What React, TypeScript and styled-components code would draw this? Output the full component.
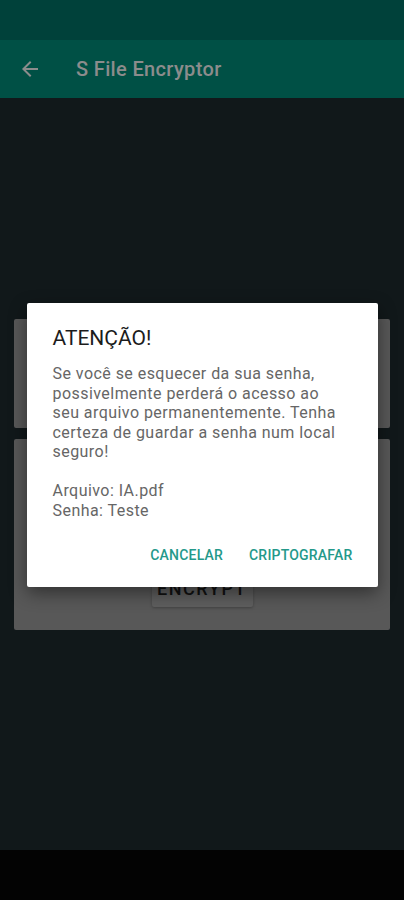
import React from 'react';
import styled, { createGlobalStyle } from 'styled-components';

const GlobalStyle = createGlobalStyle`
  html, body {
    margin: 0;
    padding: 0;
    background: #000000;
  }
  body {
    font-family: Roboto, "Noto Sans", "Liberation Sans", sans-serif;
  }
`;

const Page = styled.div`
  position: relative;
  display: flex;
  flex-direction: column;
  width: 404px;
  height: 900px;
  overflow: hidden;
  background: #11181a;
`;

const StatusBar = styled.div`
  height: 40px;
  flex: none;
  background: #00413a;
`;

const AppBar = styled.div`
  display: flex;
  align-items: center;
  height: 58px;
  flex: none;
  padding-left: 18px;
  background: #005045;
`;

const BackIcon = styled.svg`
  width: 24px;
  height: 24px;
  fill: #8c8c8c;
  flex: none;
`;

const Title = styled.span`
  margin-left: 34px;
  font-size: 20px;
  font-weight: 500;
  color: #8c8c8c;
  letter-spacing: 0.35px;
`;

const Content = styled.main`
  flex: 1;
  display: flex;
  flex-direction: column;
  justify-content: center;
  gap: 11px;
  padding: 0 14px;
`;

const Card = styled.div<{ $height: number }>`
  height: ${(p) => p.$height}px;
  display: flex;
  flex-direction: column;
  align-items: center;
  justify-content: flex-end;
  padding-bottom: 23px;
  box-sizing: border-box;
  background: #585858;
  border-radius: 2px;
`;

const FlatButton = styled.button`
  min-width: 101px;
  height: 36px;
  padding: 0 5px;
  border: none;
  border-radius: 2px;
  background: #5e5e5e;
  box-shadow: 0 1px 3px rgba(0, 0, 0, 0.25);
  color: #111111;
  font-family: inherit;
  font-size: 18px;
  font-weight: 500;
  letter-spacing: 1.6px;
`;

const NavBar = styled.div`
  height: 50px;
  flex: none;
  background: #030303;
`;

const Overlay = styled.div`
  position: absolute;
  top: 40px;
  left: 0;
  right: 0;
  bottom: 50px;
  display: flex;
  align-items: center;
  justify-content: center;
`;

const Dialog = styled.div`
  width: 351px;
  box-sizing: border-box;
  padding: 21px 17px 14px 26px;
  display: flex;
  flex-direction: column;
  background: #ffffff;
  border-radius: 2px;
  box-shadow: 0 6px 18px rgba(0, 0, 0, 0.45);
`;

const DialogTitle = styled.h2`
  margin: 0;
  font-size: 21px;
  line-height: 28px;
  font-weight: 400;
  color: #1c1c1c;
`;

const Message = styled.p`
  margin: 12px 0 0;
  font-size: 16px;
  line-height: 19.5px;
  letter-spacing: 0.45px;
  color: #666666;
  white-space: pre-line;
`;

const Actions = styled.div`
  display: flex;
  justify-content: flex-end;
  gap: 10px;
  margin-top: 17px;
`;

const ActionButton = styled.button`
  height: 36px;
  padding: 0 8px;
  border: none;
  background: transparent;
  color: #24998a;
  font-family: inherit;
  font-size: 14px;
  font-weight: 500;
  letter-spacing: 0.2px;
`;

const message =
  'Se você se esquecer da sua senha,\npossivelmente perderá o acesso ao\nseu arquivo permanentemente. Tenha\ncerteza de guardar a senha num local\nseguro!\n\nArquivo: IA.pdf\nSenha: Teste';

export default function App() {
  return (
    <Page>
      <GlobalStyle />
      <StatusBar />
      <AppBar>
        <BackIcon viewBox="0 0 24 24">
          <path d="M20 11H7.83l5.59-5.59L12 4l-8 8 8 8 1.41-1.41L7.83 13H20v-2z" />
        </BackIcon>
        <Title>S File Encryptor</Title>
      </AppBar>
      <Content>
        <Card $height={109} />
        <Card $height={191}>
          <FlatButton>ENCRYPT</FlatButton>
        </Card>
      </Content>
      <NavBar />
      <Overlay>
        <Dialog>
          <DialogTitle>ATENÇÃO!</DialogTitle>
          <Message>{message}</Message>
          <Actions>
            <ActionButton>CANCELAR</ActionButton>
            <ActionButton>CRIPTOGRAFAR</ActionButton>
          </Actions>
        </Dialog>
      </Overlay>
    </Page>
  );
}
